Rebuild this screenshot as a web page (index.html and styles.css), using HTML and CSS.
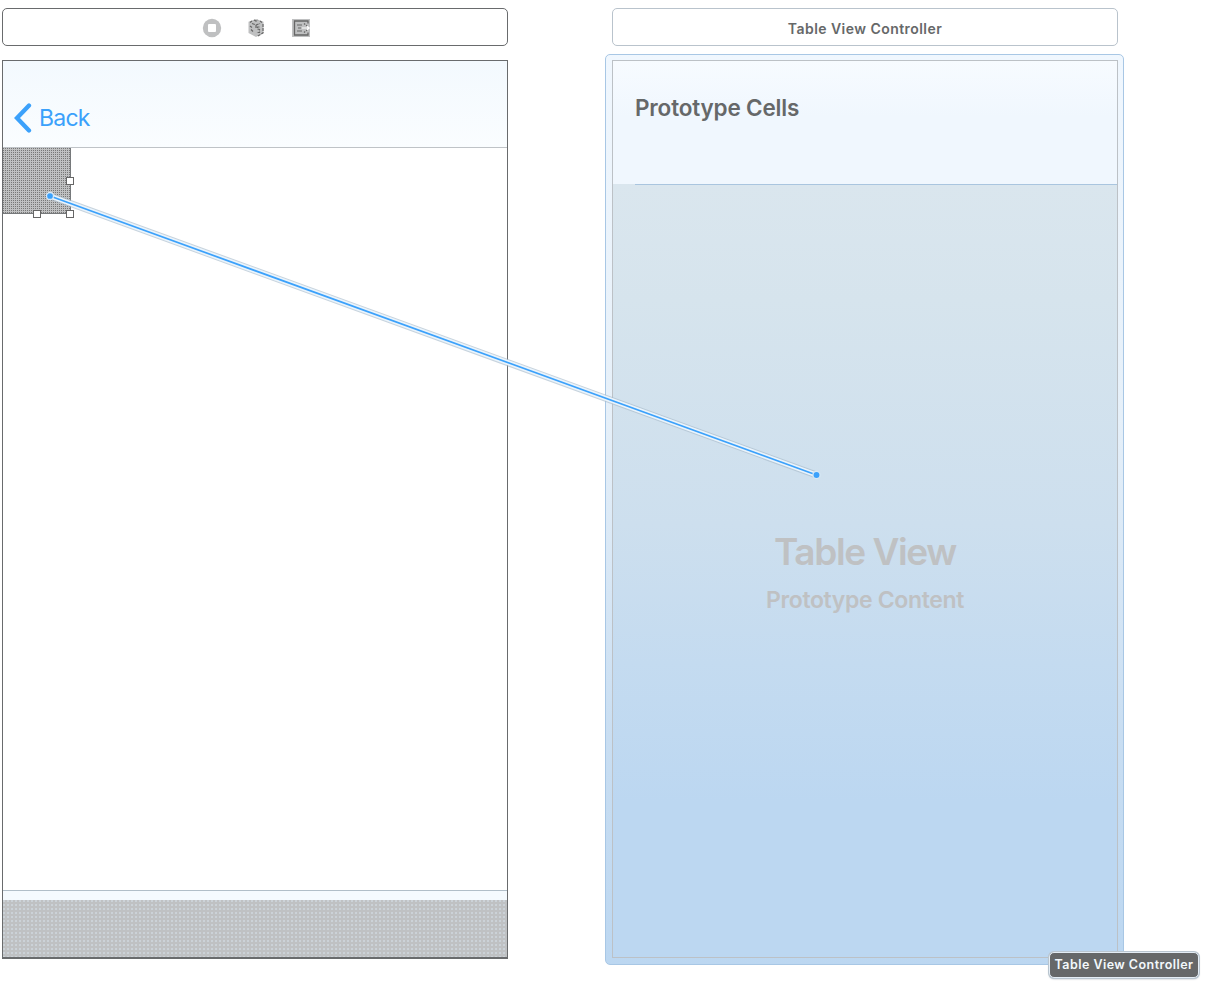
FILE: index.html
```html
<!DOCTYPE html>
<html lang="en">
<head>
<meta charset="utf-8">
<title>Storyboard</title>
<link rel="stylesheet" href="styles.css">
</head>
<body>
<main class="canvas">
  <section class="scene">
    <header class="dock dock-icons">
      <svg class="dock-icon" viewBox="0 0 20 20"><circle cx="10" cy="10" r="9.200" fill="#bfc0c1"/><rect x="6" y="6" width="8" height="8" rx="1" fill="#fff"/></svg>
      <svg class="dock-icon" viewBox="0 0 20 20"><path d="M10 1l7.500 2.800V15L10 19l-7.500-4V3.800z" fill="#bfc0c1"/><path d="M4 4.500l2-1.500m2-1l2 1 2-1m2 1l2 1.500M6 5.500l4 1.500 4-1.500M10 7v3M4 8l2 1.500m-1 2l2 2M13.500 9h-2v2l2 .5v3h-3M17 6v9l-6 3.500" fill="none" stroke="#666" stroke-width="1.200" stroke-dasharray="3 1"/></svg>
      <svg class="dock-icon" viewBox="0 0 20 20"><rect x="1" y="1" width="18" height="18" fill="#bfc0c1"/><path d="M17 5.500V3H3.500v14H17v-2.500" fill="none" stroke="#666" stroke-width="1.300"/><path d="M6 7h5M7 10h3M6 13h5" stroke="#666" stroke-width="1.200"/><path d="M11 10h8M15 7l3 3-3 3" fill="none" stroke="#fff" stroke-width="1.200"/><path d="M13 5.500l4 3M13 14.500l4-3" stroke="#666" stroke-width="1.300" stroke-dasharray="1.500 1"/></svg>
    </header>
    <div class="phone">
      <div class="navbar">
        <svg class="chevron" viewBox="0 0 18 30"><path d="M15 2.500L3 15l12 12.500" fill="none" stroke="#3ba1fb" stroke-width="4.300" stroke-linecap="round"/></svg>
        <span class="back">Back</span>
      </div>
      <div class="content">
        <div class="view">
          <i class="handle handle-e"></i><i class="handle handle-s"></i><i class="handle handle-se"></i>
        </div>
      </div>
      <div class="strip"></div>
      <div class="toolbar"></div>
    </div>
  </section>

  <section class="scene target">
    <header class="dock dock-light">Table View Controller</header>
    <div class="halo">
      <div class="table">
        <div class="cells"><h2 class="cells-title">Prototype Cells</h2></div>
        <div class="body">
          <p class="big">Table View</p>
          <p class="small">Prototype Content</p>
        </div>
      </div>
      <div class="tooltip">Table View Controller</div>
    </div>
  </section>

  <svg class="wire" viewBox="0 0 1209 990">
    <g fill="none" stroke-linecap="round">
      <path d="M50 196L816.500 475" stroke="#a9bccb" stroke-opacity=".65" stroke-width="7"/>
      <path d="M50 196L816.500 475" stroke="#eaf4fc" stroke-width="5"/>
      <path d="M50 196L816.500 475" stroke="#3ba1fb" stroke-width="1.700"/>
    </g>
    <g fill="#3ba1fb" stroke="#d8e8f5" stroke-width="1.300"><circle cx="50" cy="196" r="3.500"/><circle cx="816.500" cy="475" r="3.600"/></g>
  </svg>
</main>
</body>
</html>
```

FILE: styles.css
```css
* { box-sizing: border-box; }

body {
  margin: 0;
  background: #fff;
  font-family: Inter, "Liberation Sans", sans-serif;
  color: #666869;
}

.canvas {
  position: relative;
  display: flex;
  width: 1209px;
  height: 990px;
  padding: 8px 0 0 2px;
  overflow: hidden;
}

.scene { width: 506px; }

.dock {
  display: flex;
  align-items: center;
  justify-content: center;
  gap: 24px;
  height: 38px;
  padding-top: 1px;
  border: 1px solid #696b6d;
  border-radius: 5px;
}

.dock-icons { padding: 2px 0 0 2px; }
.dock-icon { width: 20px; height: 20px; margin-bottom: 1px; }
.dock-icon + .dock-icon { margin-left: 0.5px; }

.phone {
  display: flex;
  flex-direction: column;
  height: 899px;
  margin-top: 14px;
  border: 1px solid #696b6d;
  border-bottom-width: 2px;
}

.navbar {
  display: flex;
  align-items: center;
  gap: 7px;
  height: 87px;
  padding: 27px 0 0 11px;
  border-bottom: 1px solid #bfc3c7;
  background: linear-gradient(#f3f9fe, #fafdff);
}

.chevron { width: 18px; height: 30px; }

.back {
  color: #3ba1fb;
  font-size: 23px;
  line-height: 28px;
  letter-spacing: -0.75px;
}

.content { flex: 1; }

.view {
  position: relative;
  width: 68px;
  height: 66px;
  border-right: 1px solid #76797b;
  border-bottom: 1px solid #76797b;
  background: radial-gradient(circle at 0.5px 0.5px, #777 0.6px, transparent 0.7px) 0 0 / 2px 2px #bfc0c1;
}

.handle {
  position: absolute;
  width: 8px;
  height: 8px;
  border: 1px solid #666;
  background: #fff;
}
.handle-e { right: -4px; top: 29px; }
.handle-s { left: 30px; bottom: -5px; }
.handle-se { right: -4px; bottom: -5px; }

.strip {
  height: 10px;
  border-top: 1px solid #b1bec8;
  background: #f5fafe;
}

.toolbar {
  height: 57px;
  background: radial-gradient(circle at 1px 1px, #d8e4ee 0.6px, transparent 0.8px) 0 0 / 4px 4px #bfc1c3;
}

.target { margin-left: 104px; }

.dock-light {
  padding-top: 3px;
  border-color: #b9c3cc;
  font-size: 14px;
  font-weight: 600;
  letter-spacing: 0.45px;
}

.halo {
  position: relative;
  width: 519px;
  height: 911px;
  margin: 8px 0 0 -7px;
  padding: 5px 5px 5px 6px;
  border: 1px solid #a8c7e5;
  border-radius: 5px;
  background: linear-gradient(#f0f7fe 0, #e6f0f9 40%, #c9def2 75%, #bcd7f1);
}

.table {
  display: flex;
  flex-direction: column;
  height: 898px;
  border: 1px solid #bcc1c6;
}

.cells {
  height: 123px;
  padding: 32px 0 0 22px;
  background: linear-gradient(#f7fbff, #f0f7fe 45%);
}

.cells-title {
  margin: 0;
  font-size: 22.5px;
  line-height: 30px;
  font-weight: 600;
  letter-spacing: -0.17px;
}

.body {
  flex: 1;
  padding-top: 343px;
  background:
    linear-gradient(#a9c5df, #a9c5df) 22px 0 / 100% 1px no-repeat,
    linear-gradient(#dae6ee 0, #d6e4ed 15%, #cddfee 44%, #c4dbf0 62%, #bcd7f1 80%);
  color: #bfc1c3;
  text-align: center;
}

.big, .small { margin: 0; font-weight: 600; }
.big { font-size: 37px; line-height: 50px; letter-spacing: -1.4px; }
.small { margin-top: 8px; font-size: 23px; line-height: 30px; letter-spacing: -0.35px; }

.tooltip {
  position: absolute;
  left: 443px;
  top: 897px;
  width: 150px;
  height: 26px;
  border: 1px solid #e4edf5;
  border-radius: 5px;
  background: #666869;
  box-shadow: 0 0 0 1px #b9c5cf, 0 1px 2px #a5adb3;
  color: #f3f8fc;
  font-size: 12.5px;
  font-weight: 600;
  line-height: 24px;
  letter-spacing: 0.45px;
  text-align: center;
}

.wire {
  position: absolute;
  inset: 0;
  width: 1209px;
  height: 990px;
  pointer-events: none;
}
```
